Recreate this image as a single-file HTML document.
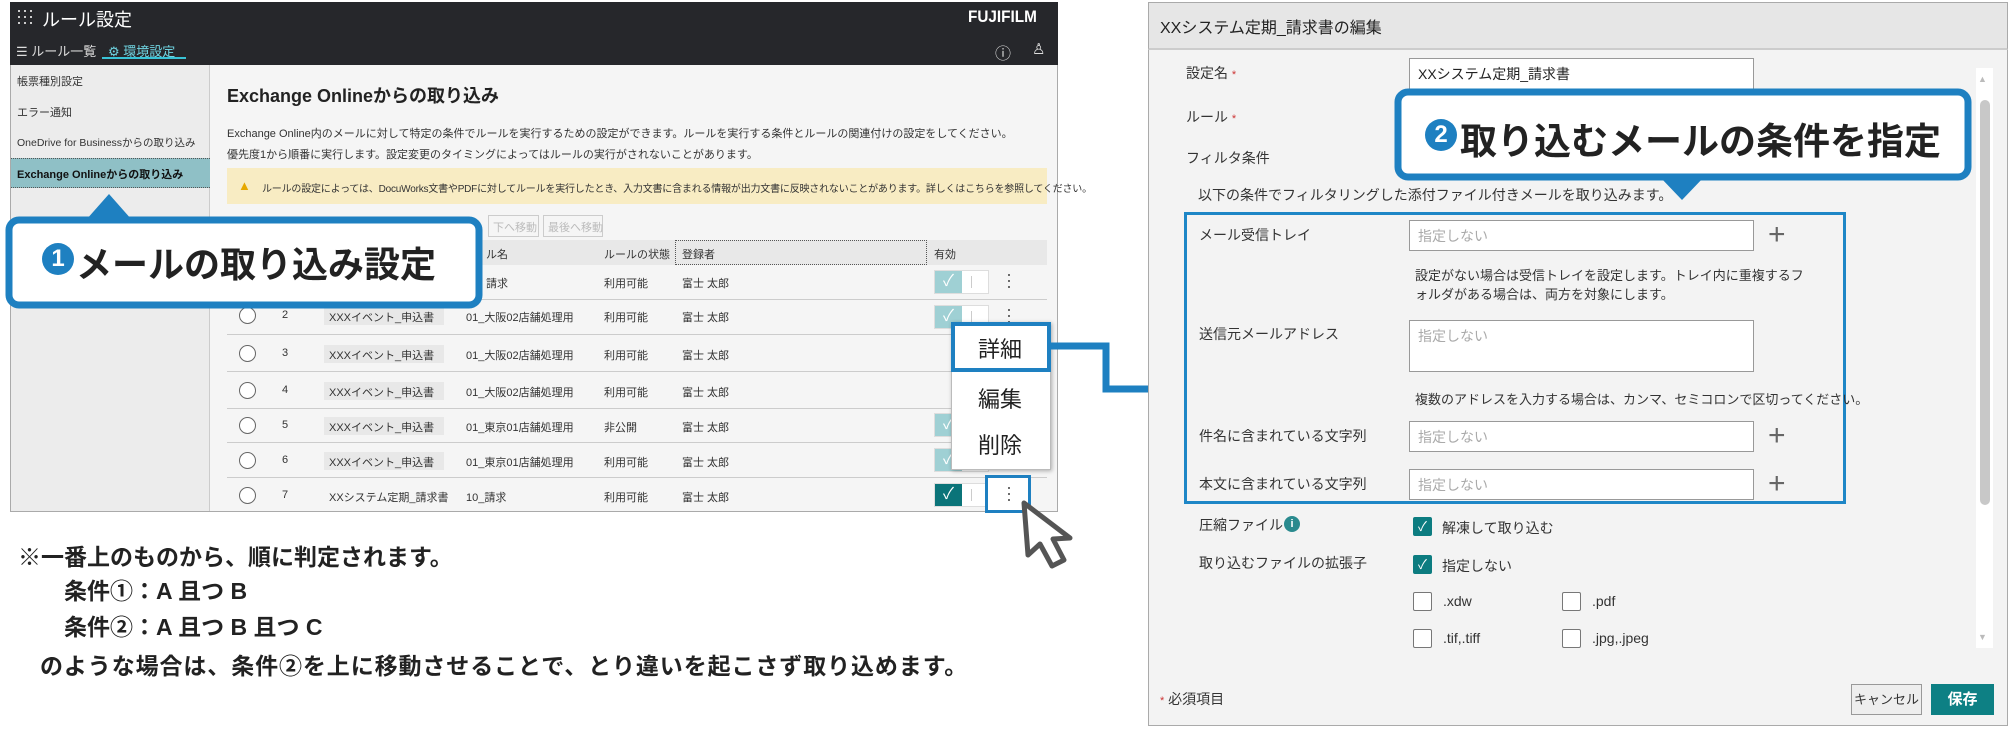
<!DOCTYPE html>
<html><head><meta charset="utf-8"><style>
*{margin:0;padding:0;box-sizing:border-box}
body{width:2012px;height:729px;background:#fff;position:relative;overflow:hidden;font-family:"Liberation Sans","Noto Sans CJK JP",sans-serif;color:#222}
.a{position:absolute;white-space:nowrap}
.s{font-size:11px;color:#333}
.row{position:absolute;left:227px;width:820px;border-bottom:1px solid #ccc;height:36px}
.tg{position:absolute;left:934px;width:55px;height:24px;border:1px solid #ddd;background:#fff}
.tg i{position:absolute;left:0;top:0;width:27px;height:22px;background:#9fd0d4;color:#fff;font-style:normal;text-align:center;font-size:16px;line-height:22px}
.tg b{position:absolute;left:36px;top:5px;width:1px;height:12px;background:#ccc}
.keb{position:absolute;left:1006px;width:4px;font-size:18px;line-height:6px;color:#555}
.inp{position:absolute;left:1409px;width:345px;background:#fff;border:1px solid #999;font-size:14px;color:#aaa;padding:5px 8px}
.lab{position:absolute;font-size:14px;color:#333;white-space:nowrap}
.plus{position:absolute;left:1768px;font-size:30px;color:#666;font-weight:300;line-height:30px}
.cb{position:absolute;width:19px;height:19px;border:1.5px solid #777;background:#fff;border-radius:2px}
.cb.on{background:#0c7c80;border-color:#0c7c80;color:#fff;font-size:13px;text-align:center;line-height:17px}
</style></head><body>

<div class="a" style="left:10px;top:2px;width:1048px;height:510px;border:1px solid #aaa;background:#f5f5f5"></div>
<div class="a" style="left:10px;top:2px;width:1048px;height:63px;background:#26272b"></div>
<svg class="a" style="left:17px;top:9px" width="16" height="16"><g fill="#ccc"><rect x="1" y="1" width="2" height="2"/><rect x="7" y="1" width="2" height="2"/><rect x="13" y="1" width="2" height="2"/><rect x="1" y="7" width="2" height="2"/><rect x="7" y="7" width="2" height="2"/><rect x="13" y="7" width="2" height="2"/><rect x="1" y="13" width="2" height="2"/><rect x="7" y="13" width="2" height="2"/><rect x="13" y="13" width="2" height="2"/></g></svg>
<div class="a" style="left:42px;top:6px;color:#fff;font-size:18px">ルール設定</div>
<div class="a" style="left:968px;top:7px;color:#fff;font-size:17px;font-weight:bold;transform:scaleX(.9);transform-origin:left">FUJIFILM</div>
<div class="a" style="left:16px;top:41px;color:#ddd;font-size:13px">☰ ルール一覧</div>
<div class="a" style="left:108px;top:41px;color:#6fd3e0;font-size:13px">⚙ 環境設定</div>
<div class="a" style="left:102px;top:57px;width:84px;height:2px;background:#39c3d6"></div>
<div class="a" style="left:995px;top:40px;color:#ddd;font-size:16px">ⓘ</div>
<div class="a" style="left:1032px;top:40px;color:#ddd;font-size:15px">♙</div>
<div class="a" style="left:11px;top:65px;width:199px;height:446px;background:#ececec;border-right:1px solid #ccc"></div>
<div class="a s" style="left:17px;top:73px">帳票種別設定</div>
<div class="a s" style="left:17px;top:104px">エラー通知</div>
<div class="a s" style="left:17px;top:135px;font-size:10.5px">OneDrive for Businessからの取り込み</div>
<div class="a" style="left:11px;top:158px;width:199px;height:30px;background:#8fc0c6;border-top:1px dotted #555;border-bottom:1px dotted #555"></div>
<div class="a s" style="left:17px;top:166px;color:#111;font-weight:bold">Exchange Onlineからの取り込み</div>
<div class="a" style="left:227px;top:82px;font-size:18px;font-weight:bold;color:#222">Exchange Onlineからの取り込み</div>
<div class="a" style="left:227px;top:125px;font-size:11px;color:#333">Exchange Online内のメールに対して特定の条件でルールを実行するための設定ができます。ルールを実行する条件とルールの関連付けの設定をしてください。</div>
<div class="a" style="left:227px;top:146px;font-size:11px;color:#333">優先度1から順番に実行します。設定変更のタイミングによってはルールの実行がされないことがあります。</div>
<div class="a" style="left:227px;top:168px;width:820px;height:36px;background:#f8ecc3"></div>
<div class="a" style="left:238px;top:178px;font-size:13px;color:#e6a800">▲</div>
<div class="a" style="left:262px;top:180px;font-size:10px;color:#333;letter-spacing:-.2px">ルールの設定によっては、DocuWorks文書やPDFに対してルールを実行したとき、入力文書に含まれる情報が出力文書に反映されないことがあります。詳しくはこちらを参照してください。</div>
<div class="a" style="left:488px;top:215px;width:51px;height:22px;border:1px solid #ccc;font-size:11px;color:#bbb;padding:3px 4px">下へ移動</div>
<div class="a" style="left:543px;top:215px;width:60px;height:22px;border:1px solid #ccc;font-size:11px;color:#bbb;padding:3px 4px">最後へ移動</div>
<div class="a" style="left:227px;top:240px;width:820px;height:25px;background:#e8e8e8"></div>
<div class="a" style="left:675px;top:240px;width:252px;height:25px;border:1px dotted #555"></div>
<div class="a s" style="left:486px;top:246px">ル名</div>
<div class="a s" style="left:604px;top:246px">ルールの状態</div>
<div class="a s" style="left:682px;top:246px">登録者</div>
<div class="a s" style="left:934px;top:246px">有効</div>

<div class="row" style="top:264px"></div>
<div class="a s" style="left:486px;top:275px">請求</div><div class="a s" style="left:604px;top:275px">利用可能</div><div class="a s" style="left:682px;top:275px">富士 太郎</div>
<div class="tg" style="top:270px"><i>✓</i><b></b></div><div class="keb" style="top:271px">·<br>·<br>·</div>

<div class="row" style="top:299px"></div>
<div class="a" style="left:239px;top:307px;width:17px;height:17px;border:1px solid #666;border-radius:50%;background:#fff"></div>
<div class="a s" style="left:282px;top:309px">2</div>
<div class="a" style="left:324px;top:307px;width:120px;height:18px;background:#e8e8e8"></div><div class="a s" style="left:329px;top:309px">XXXイベント_申込書</div>
<div class="a s" style="left:466px;top:309px">01_大阪02店舗処理用</div><div class="a s" style="left:604px;top:309px">利用可能</div><div class="a s" style="left:682px;top:309px">富士 太郎</div>
<div class="tg" style="top:305px"><i>✓</i><b></b></div><div class="keb" style="top:306px">·<br>·<br>·</div>

<div class="row" style="top:336px"></div>
<div class="a" style="left:239px;top:345px;width:17px;height:17px;border:1px solid #666;border-radius:50%;background:#fff"></div>
<div class="a s" style="left:282px;top:347px">3</div>
<div class="a" style="left:324px;top:345px;width:120px;height:18px;background:#e8e8e8"></div><div class="a s" style="left:329px;top:347px">XXXイベント_申込書</div>
<div class="a s" style="left:466px;top:347px">01_大阪02店舗処理用</div><div class="a s" style="left:604px;top:347px">利用可能</div><div class="a s" style="left:682px;top:347px">富士 太郎</div>

<div class="row" style="top:373px"></div>
<div class="a" style="left:239px;top:382px;width:17px;height:17px;border:1px solid #666;border-radius:50%;background:#fff"></div>
<div class="a s" style="left:282px;top:384px">4</div>
<div class="a" style="left:324px;top:382px;width:120px;height:18px;background:#e8e8e8"></div><div class="a s" style="left:329px;top:384px">XXXイベント_申込書</div>
<div class="a s" style="left:466px;top:384px">01_大阪02店舗処理用</div><div class="a s" style="left:604px;top:384px">利用可能</div><div class="a s" style="left:682px;top:384px">富士 太郎</div>

<div class="row" style="top:407px"></div>
<div class="a" style="left:239px;top:417px;width:17px;height:17px;border:1px solid #666;border-radius:50%;background:#fff"></div>
<div class="a s" style="left:282px;top:419px">5</div>
<div class="a" style="left:324px;top:417px;width:120px;height:18px;background:#e8e8e8"></div><div class="a s" style="left:329px;top:419px">XXXイベント_申込書</div>
<div class="a s" style="left:466px;top:419px">01_東京01店舗処理用</div><div class="a s" style="left:604px;top:419px">非公開</div><div class="a s" style="left:682px;top:419px">富士 太郎</div>
<div class="tg" style="top:413px"><i>✓</i></div>

<div class="row" style="top:442px"></div>
<div class="a" style="left:239px;top:452px;width:17px;height:17px;border:1px solid #666;border-radius:50%;background:#fff"></div>
<div class="a s" style="left:282px;top:454px">6</div>
<div class="a" style="left:324px;top:452px;width:120px;height:18px;background:#e8e8e8"></div><div class="a s" style="left:329px;top:454px">XXXイベント_申込書</div>
<div class="a s" style="left:466px;top:454px">01_東京01店舗処理用</div><div class="a s" style="left:604px;top:454px">利用可能</div><div class="a s" style="left:682px;top:454px">富士 太郎</div>
<div class="tg" style="top:448px"><i>✓</i></div>

<div class="a" style="left:239px;top:487px;width:17px;height:17px;border:1px solid #666;border-radius:50%;background:#fff"></div>
<div class="a s" style="left:282px;top:489px">7</div>
<div class="a s" style="left:329px;top:489px">XXシステム定期_請求書</div>
<div class="a s" style="left:466px;top:489px">10_請求</div><div class="a s" style="left:604px;top:489px">利用可能</div><div class="a s" style="left:682px;top:489px">富士 太郎</div>
<div class="tg" style="top:483px"><i style="background:#0b7479">✓</i><b></b></div>
<div class="a" style="left:985px;top:475px;width:46px;height:38px;border:3px solid #1e80c1;background:#fff"></div>
<div class="keb" style="top:484px">·<br>·<br>·</div>

<div class="a" style="left:951px;top:322px;width:100px;height:148px;background:#fff;border:1px solid #bbb;box-shadow:1px 1px 4px rgba(0,0,0,.3)"></div>
<div class="a" style="left:951px;top:322px;width:100px;height:50px;border:4px solid #1e80c1"></div>
<div class="a" style="left:978px;top:332px;font-size:22px;color:#222">詳細</div>
<div class="a" style="left:978px;top:382px;font-size:22px;color:#222">編集</div>
<div class="a" style="left:978px;top:428px;font-size:22px;color:#222">削除</div>

<svg class="a" style="left:1050px;top:336px" width="130" height="70"><path d="M0 10 H56 V53 H110" fill="none" stroke="#1e80c1" stroke-width="7"/><path d="M106 40 L124 53 L106 66Z" fill="#1e80c1"/></svg>

<svg class="a" style="left:1018px;top:500px" width="75" height="75"><path d="M6 3 L10 55 L22 44 L34 66 L46 60 L35 39 L52 38 Z" fill="#fff" stroke="#555" stroke-width="5" stroke-linejoin="round"/></svg>

<svg class="a" style="left:0;top:190px" width="490" height="125"><path d="M86 30 L109 4 L132 30Z" fill="#1e80c1"/><rect x="9" y="30" width="470" height="85" rx="10" fill="#fff" stroke="#1e80c1" stroke-width="7"/></svg>
<div class="a" style="left:42px;top:243px;width:32px;height:32px;border-radius:50%;background:#1e80c1;color:#fff;font-size:24px;font-weight:bold;text-align:center;line-height:32px">1</div>
<div class="a" style="left:76px;top:236px;font-size:36px;font-weight:bold;color:#222">メールの取り込み設定</div>

<div class="a" style="left:18px;top:538px;font-size:23px;font-weight:bold;color:#222">※一番上のものから、順に判定されます。</div>
<div class="a" style="left:64px;top:572px;font-size:23px;font-weight:bold;color:#222">条件①：A 且つ B</div>
<div class="a" style="left:64px;top:608px;font-size:23px;font-weight:bold;color:#222">条件②：A 且つ B 且つ C</div>
<div class="a" style="left:40px;top:647px;font-size:23px;font-weight:bold;color:#222;letter-spacing:.9px">のような場合は、条件②を上に移動させることで、とり違いを起こさず取り込めます。</div>

<div class="a" style="left:1148px;top:2px;width:860px;height:724px;background:#f3f3f3;border:1px solid #aaa"></div>
<div class="a" style="left:1148px;top:2px;width:860px;height:48px;background:#e6e6e6;border:1px solid #aaa;border-bottom:2px solid #ccc"></div>
<div class="a" style="left:1160px;top:14px;font-size:16px;color:#222">XXシステム定期_請求書の編集</div>
<div class="a" style="left:1976px;top:68px;width:17px;height:580px;background:#fff"></div>
<div class="a" style="left:1980px;top:100px;width:10px;height:405px;background:#c8c8c8;border-radius:5px"></div>
<div class="a" style="left:1978px;top:74px;font-size:9px;color:#bbb">▲</div>
<div class="a" style="left:1978px;top:632px;font-size:9px;color:#bbb">▼</div>

<div class="lab" style="left:1186px;top:63px">設定名 <span style="color:#c33;font-size:11px">*</span></div>
<div class="inp" style="top:58px;height:34px;color:#222">XXシステム定期_請求書</div>
<div class="lab" style="left:1186px;top:107px">ルール <span style="color:#c33;font-size:11px">*</span></div>
<div class="lab" style="left:1186px;top:148px">フィルタ条件</div>
<div class="lab" style="left:1198px;top:185px">以下の条件でフィルタリングした添付ファイル付きメールを取り込みます。</div>

<div class="a" style="left:1184px;top:212px;width:662px;height:292px;border:3px solid #1e86c6"></div>
<div class="lab" style="left:1199px;top:225px">メール受信トレイ</div>
<div class="inp" style="top:220px;height:31px">指定しない</div>
<div class="plus" style="top:220px">+</div>
<div class="lab" style="left:1415px;top:266px;font-size:13px;line-height:19px">設定がない場合は受信トレイを設定します。トレイ内に重複するフ<br>ォルダがある場合は、両方を対象にします。</div>
<div class="lab" style="left:1199px;top:324px">送信元メールアドレス</div>
<div class="inp" style="top:320px;height:52px">指定しない</div>
<div class="lab" style="left:1415px;top:389px;font-size:13px">複数のアドレスを入力する場合は、カンマ、セミコロンで区切ってください。</div>
<div class="lab" style="left:1199px;top:426px">件名に含まれている文字列</div>
<div class="inp" style="top:421px;height:31px">指定しない</div>
<div class="plus" style="top:421px">+</div>
<div class="lab" style="left:1199px;top:474px">本文に含まれている文字列</div>
<div class="inp" style="top:469px;height:31px">指定しない</div>
<div class="plus" style="top:469px">+</div>

<div class="lab" style="left:1199px;top:515px">圧縮ファイル</div>
<div class="a" style="left:1284px;top:516px;width:16px;height:16px;border-radius:50%;background:#2a8a8e;color:#fff;font-size:11px;font-weight:bold;text-align:center;line-height:16px">i</div>
<div class="cb on" style="left:1413px;top:517px">✓</div>
<div class="lab" style="left:1442px;top:518px">解凍して取り込む</div>
<div class="lab" style="left:1199px;top:553px">取り込むファイルの拡張子</div>
<div class="cb on" style="left:1413px;top:555px">✓</div>
<div class="lab" style="left:1442px;top:556px">指定しない</div>
<div class="cb" style="left:1413px;top:592px"></div><div class="lab" style="left:1443px;top:593px">.xdw</div>
<div class="cb" style="left:1562px;top:592px"></div><div class="lab" style="left:1592px;top:593px">.pdf</div>
<div class="cb" style="left:1413px;top:629px"></div><div class="lab" style="left:1443px;top:630px">.tif,.tiff</div>
<div class="cb" style="left:1562px;top:629px"></div><div class="lab" style="left:1592px;top:630px">.jpg,.jpeg</div>

<div class="lab" style="left:1160px;top:689px"><span style="color:#c33;font-size:11px">*</span> 必須項目</div>
<div class="a" style="left:1851px;top:684px;width:71px;height:31px;background:#eee;border:1px solid #999;font-size:13px;text-align:center;line-height:29px;color:#333">キャンセル</div>
<div class="a" style="left:1931px;top:684px;width:63px;height:31px;background:#0d8084;font-size:15px;font-weight:bold;text-align:center;line-height:31px;color:#fff">保存</div>

<svg class="a" style="left:1390px;top:88px" width="590" height="115"><rect x="8" y="4" width="570" height="85" rx="10" fill="#fff" stroke="#1e80c1" stroke-width="7"/><path d="M270 89 L292 112 L314 89Z" fill="#1e80c1"/></svg>
<div class="a" style="left:1425px;top:119px;width:32px;height:32px;border-radius:50%;background:#1e80c1;color:#fff;font-size:24px;font-weight:bold;text-align:center;line-height:32px">2</div>
<div class="a" style="left:1460px;top:111px;font-size:37px;font-weight:bold;color:#222">取り込むメールの条件を指定</div>
</body></html>
